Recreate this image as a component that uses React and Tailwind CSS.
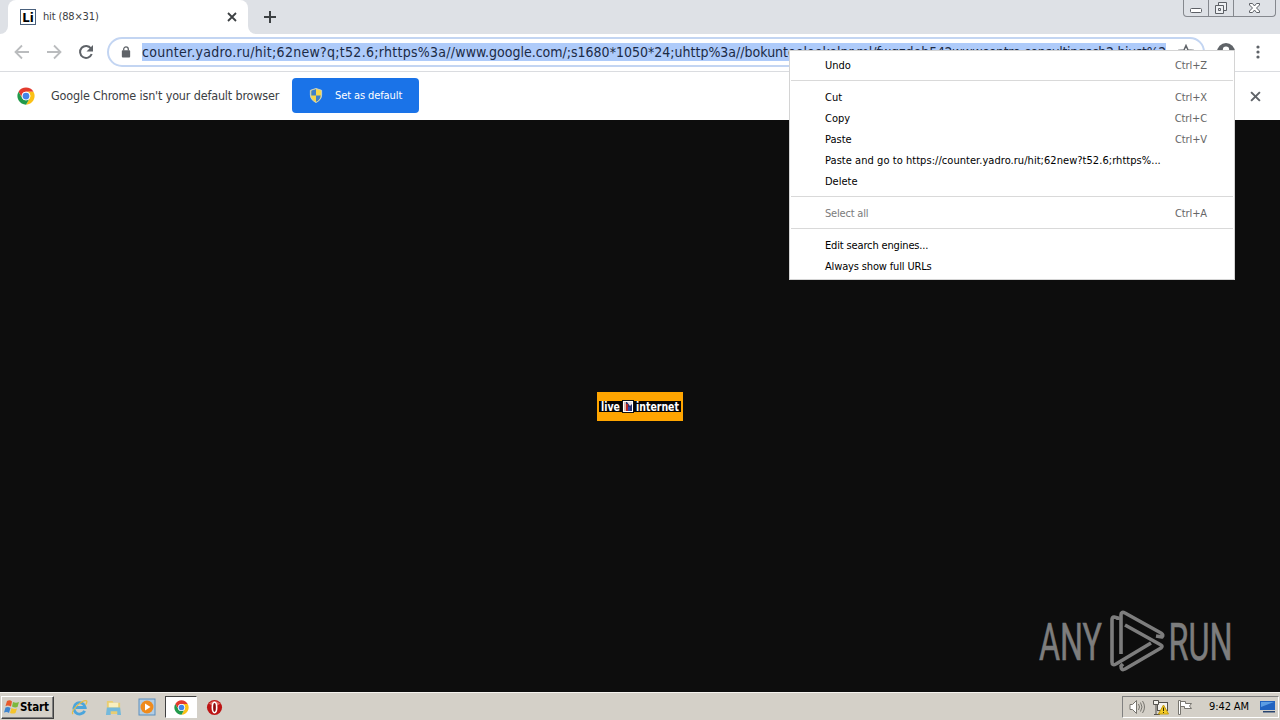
import React from 'react';

const menuGroups = [
  [{ label: 'Undo', keys: 'Ctrl+Z' }],
  [
    { label: 'Cut', keys: 'Ctrl+X' },
    { label: 'Copy', keys: 'Ctrl+C' },
    { label: 'Paste', keys: 'Ctrl+V' },
    {
      label: 'Paste and go to https://counter.yadro.ru/hit;62new?t52.6;rhttps%...',
      spacing: 'tracking-[0.05px]',
    },
    { label: 'Delete' },
  ],
  [{ label: 'Select all', keys: 'Ctrl+A', disabled: true, spacing: 'tracking-[-0.2px]' }],
  [
    { label: 'Edit search engines...', spacing: 'tracking-[-0.15px]' },
    { label: 'Always show full URLs', spacing: 'tracking-[-0.15px]' },
  ],
];

const ChromeLogo = ({ className }) => (
  <svg viewBox="0 0 48 48" className={className}>
    <circle cx="24" cy="24" r="23" fill="#fff" />
    <path d="M4.1 12.5A23 23 0 0 1 43.9 12.5H24A11.5 11.5 0 0 0 14 29.7Z" fill="#e33b2e" />
    <path d="M43.9 12.5A23 23 0 0 1 24 47L34 29.7A11.5 11.5 0 0 0 24 12.5Z" fill="#fbc116" />
    <path d="M24 47A23 23 0 0 1 4.1 12.5L14 29.7A11.5 11.5 0 0 0 34 29.7Z" fill="#229a4b" />
    <circle cx="24" cy="24" r="11.5" fill="#fff" />
    <circle cx="24" cy="24" r="9" fill="#4285e8" />
  </svg>
);

const CloseIcon = ({ className }) => (
  <svg viewBox="0 0 10 10" className={className} fill="none" stroke="currentColor">
    <path d="M1 1l8 8M9 1l-8 8" strokeWidth="1.8" />
  </svg>
);

const TabStrip = () => (
  <div className="flex h-[34px] justify-between bg-[#dee1e6]">
    <div className="flex">
      <div className="h-[34px] w-2 bg-white">
        <div className="h-full w-2 rounded-br-lg bg-[#dee1e6]"></div>
      </div>
      <div className="flex h-[34px] w-[240px] items-center rounded-t-lg bg-white pl-3 pr-[11px] text-[#3c4043]">
        <div className="flex h-4 w-4 items-center justify-center border border-[#49607c] bg-white">
          <span className="font-['DejaVu_Sans_Condensed'] text-[13px] font-bold leading-none text-black">Li</span>
        </div>
        <span className="ml-[7px] grow whitespace-nowrap pt-px text-[11px] tracking-[-0.15px]">hit (88×31)</span>
        <CloseIcon className="h-[10px] w-[10px]" />
      </div>
      <div className="h-[34px] w-2 bg-white">
        <div className="h-full w-2 rounded-bl-lg bg-[#dee1e6]"></div>
      </div>
      <svg viewBox="0 0 12 12" className="ml-2 mt-[11px] h-3 w-3">
        <path d="M6 0v12M0 6h12" stroke="#3c4043" strokeWidth="2" />
      </svg>
    </div>
    <div className="mr-1 flex h-[17px] w-[93px] rounded-b border border-t-0 border-[#85888e] text-[#5d6066]">
      <div className="w-[25px] border-r border-[#85888e]">
        <svg viewBox="0 0 24 16" className="h-4 w-6" fill="#fff" stroke="currentColor">
          <rect x="6.5" y="8.5" width="11" height="4" rx="1" />
        </svg>
      </div>
      <div className="w-[25px] border-r border-[#85888e]">
        <svg viewBox="0 0 24 16" className="h-4 w-6" fill="#eef0f3" stroke="currentColor">
          <path d="M9.5 2.5h8v8h-8z" />
          <path d="M6.5 5.5h8v8h-8z" />
          <path d="M9.5 8.5h2v2h-2z" />
        </svg>
      </div>
      <svg viewBox="0 0 41 16" className="h-4 w-[41px]" fill="#fff" stroke="currentColor">
        <path d="M15.500 3.500h3l2 2.500 2-2.500h3v1.500l-3 3 3 3v1.500h-3l-2-2.500-2 2.500h-3v-1.500l3-3-3-3z" />
      </svg>
    </div>
  </div>
);

const Toolbar = () => (
  <div className="flex h-[38px] items-center border-b border-[#dadce0] bg-white pb-px pl-[14px]">
    <svg viewBox="0 0 16 16" className="h-4 w-4" fill="none" stroke="#babcbe" strokeWidth="1.8">
      <path d="M15 8H2M8 1.500L1.500 8 8 14.500" />
    </svg>
    <svg viewBox="0 0 16 16" className="ml-4 h-4 w-4" fill="none" stroke="#babcbe" strokeWidth="1.8">
      <path d="M1 8h13M8 1.500L14.500 8 8 14.500" />
    </svg>
    <svg viewBox="0 0 16 16" className="ml-4 h-4 w-4">
      <path d="M13 4.500A6 6 0 1 0 13.700 10" fill="none" stroke="#5f6368" strokeWidth="2" />
      <path d="M15 1v6.500H8.500z" fill="#5f6368" />
    </svg>
    <div className="ml-[13px] flex h-[30px] w-[1098px] items-center rounded-full border-2 border-[#c3d5f2] bg-white pl-3">
      <svg viewBox="0 0 10 13" className="h-3 w-[10px]">
        <path d="M2.500 5V3.500a2.500 2.500 0 0 1 5 0V5" fill="none" stroke="#5f6368" strokeWidth="1.400" />
        <rect x="0.500" y="4.500" width="9" height="8" rx="1" fill="#5f6368" />
      </svg>
      <div className="ml-[11px] h-[18px] w-[1024px] overflow-hidden whitespace-nowrap bg-[#aecbfa] text-[14px] leading-[18px] text-[#1b2a45]">
        <span className="tracking-[0.28px]">counter.yadro.ru/hit;62new?q;t52.6;rhttps%3a//</span>
        <span>www.google.com/;s1680*1050*24;uhttp%3a//bokunteeloekelpr.ml/fwgzdeh</span>
        <span className="tracking-[-0.35px]">542wwwcentre.consultingsch2:hjust%2</span>
      </div>
      <svg viewBox="0 0 16 16" className="ml-3 h-4 w-4" fill="none" stroke="#5f6368" strokeWidth="1.500">
        <path d="M8 1.500l2 4.500 4.500.4-3.500 3 1 4.600-4-2.500-4 2.500 1-4.600-3.500-3L6 6z" />
      </svg>
    </div>
    <svg viewBox="0 0 20 20" className="ml-3 h-[18px] w-[18px]">
      <circle cx="10" cy="10" r="10" fill="#5f6368" />
      <circle cx="10" cy="7.500" r="3.500" fill="#fff" />
      <path d="M4 15c2-4 10-4 12 0-3 4-9 4-12 0z" fill="#fff" />
    </svg>
    <svg viewBox="0 0 4 14" className="ml-[21px] h-[14px] w-1" fill="#5f6368">
      <circle cx="2" cy="2" r="1.600" />
      <circle cx="2" cy="7" r="1.600" />
      <circle cx="2" cy="12" r="1.600" />
    </svg>
  </div>
);

const InfoBar = () => (
  <div className="flex h-12 items-center bg-white pb-px pl-[17px] pr-[19px]">
    <ChromeLogo className="mt-px h-[18px] w-[18px]" />
    <span className="ml-4 w-[241px] whitespace-nowrap pt-px text-[12.5px] tracking-[-0.17px] text-[#3c4043]">
      Google Chrome isn't your default browser
    </span>
    <button className="flex h-[35px] w-[127px] items-center rounded bg-[#1a73e8] pl-[17px] text-[11px] text-white">
      <svg viewBox="0 0 14 16" className="h-[15px] w-[14px]">
        <path d="M7 .5l6 2v5c0 4-3 6.500-6 8-3-1.500-6-4-6-8v-5z" fill="#f7d64a" />
        <path d="M7 1L2 2.700V8h5zM7 8h5c0 3.500-2.500 5.500-5 7z" fill="#3f80c9" />
        <path d="M7 .5l6 2v5c0 4-3 6.500-6 8-3-1.500-6-4-6-8v-5z" fill="none" stroke="#cbd3c8" />
      </svg>
      <span className="ml-3 whitespace-nowrap pt-px tracking-[-0.1px]">Set as default</span>
    </button>
    <CloseIcon className="ml-auto mt-px h-[11px] w-[11px] text-[#5f6368]" />
  </div>
);

const LiveInternet = () => (
  <svg viewBox="0 0 86 29" className="h-[29px] w-[86px]">
    <rect width="86" height="29" fill="#ffa500" />
    <rect x="2" y="9" width="82" height="11" fill="#050505" />
    <g fill="#fff" fontFamily="DejaVu Sans Condensed" fontWeight="bold" fontSize="11.5">
      <text x="4" y="19" textLength="19" lengthAdjust="spacingAndGlyphs">live</text>
      <text x="39" y="19" textLength="43" lengthAdjust="spacingAndGlyphs">internet</text>
    </g>
    <rect x="25" y="8" width="12" height="13" fill="#111" />
    <rect x="26" y="9" width="10" height="11" fill="#fff" />
    <rect x="27" y="10" width="8" height="9" fill="#26316f" />
    <path d="M27 10h2v9h-2z" fill="#d8b9b0" />
    <path d="M29 12h2v7h-2z" fill="#b32323" />
    <path d="M30 10h5v2l-2 2z" fill="#e5dfe4" />
    <path d="M31 15h2v4h-2z" fill="#2843a8" />
  </svg>
);

const Watermark = () => (
  <svg viewBox="0 0 200 70" className="h-[70px] w-[200px] overflow-visible">
    <g fill="#7d7d7d" stroke="#7d7d7d" strokeWidth="0.6" fontFamily="Roboto" fontSize="51">
      <text x="0" y="49.5" textLength="63" lengthAdjust="spacingAndGlyphs">ANY</text>
      <text x="129.500" y="49.5" textLength="64" lengthAdjust="spacingAndGlyphs">RUN</text>
    </g>
    <g fill="none" stroke="#7d7d7d" strokeWidth="3.6" strokeLinejoin="round">
      <path d="M79 10V8l-4-1q-2 0-2 3v42q0 4 4 2l35-21" />
      <path d="M82 44V5q0-4 4-2l36 20q3 2 1 4l-6-1" />
      <path d="M86 15l36 20q2 1 0 3L86 59q-4 2-4-3l2-2" />
    </g>
  </svg>
);

const ContextMenu = () => (
  <div className="absolute left-[789px] top-[50px] h-[230px] w-[446px] border border-[#d4d4d4] bg-white px-px pt-1 text-[11px] text-black">
    {menuGroups.map((group, i) => (
      <div key={i} className={i > 0 ? 'mt-1 border-t border-[#d9d9d9] pt-1.5' : ''}>
        {group.map((item) => (
          <div
            key={item.label}
            className={`flex h-[21px] items-center justify-between whitespace-nowrap pl-[34px] pr-[26px] pt-0.5 ${item.disabled ? 'text-[#7b7b7b]' : ''}`}
          >
            <span className={item.spacing}>{item.label}</span>
            <span className="tracking-[-0.1px] text-[#666]">{item.keys}</span>
          </div>
        ))}
      </div>
    ))}
  </div>
);

const Taskbar = () => (
  <div className="flex h-7 items-center border-t border-[#f4f2ee] bg-[#d4d0c8] pl-px pt-px">
    <button className="flex h-[23px] w-[53px] items-center border border-b-[#404040] border-l-white border-r-[#404040] border-t-white pl-0.5 shadow-[inset_-1px_-1px_0_#808080]">
      <svg viewBox="0 0 16 16" className="h-4 w-4">
        <path d="M3 2q3-1.500 5 .5L7 7.500Q4 6 1.500 7z" fill="#e8592b" />
        <path d="M9 3q3 1.500 6 0l-1.500 5Q11 9 8 7.500z" fill="#7cb83d" />
        <path d="M1.500 8.500q3-1 5 .5l-1.500 5q-2-1.500-5-.5z" fill="#3f85cf" />
        <path d="M7.500 9q3 1.500 5.500.5L11.500 14q-2.500 1-5.500 0z" fill="#f5c42c" />
      </svg>
      <span className="pt-px text-[11.5px] font-bold tracking-[-0.1px] text-black">Start</span>
    </button>
    <div className="ml-[17px] flex items-center">
      <svg viewBox="0 0 18 18" className="h-[17px] w-[17px]" fill="none">
        <path d="M14.500 12.500A6 6 0 1 1 15 9H5" stroke="#4ba5dc" strokeWidth="3" />
        <path d="M2 16C-1 12 13 0 16.500 2q1 1-1 4" stroke="#e7bd45" strokeWidth="1.300" />
      </svg>
      <svg viewBox="0 0 18 18" className="ml-[17px] h-[17px] w-[17px]">
        <path d="M2 2h6l1 2h7v12H2z" fill="#e9cd72" />
        <path d="M4 4h10v5H4z" fill="#f9efbf" />
        <path d="M2 9h14l1 8h-4v-4H6v4H1z" fill="#74b9dc" />
      </svg>
      <svg viewBox="0 0 18 18" className="ml-4 h-[18px] w-[18px]">
        <rect x="1" y="1" width="16" height="16" fill="#b2cde4" stroke="#5d8fbd" />
        <circle cx="9" cy="9" r="6.500" fill="#ef8b1d" />
        <path d="M7 5.500v7L12.500 9z" fill="#fff" />
      </svg>
      <div className="ml-[9px] flex h-[22px] w-8 items-center justify-center border border-b-white border-l-[#404040] border-r-white border-t-[#404040] bg-white">
        <ChromeLogo className="h-[15px] w-[15px]" />
      </div>
      <svg viewBox="0 0 18 18" className="ml-[9px] h-[17px] w-[17px]">
        <circle cx="9" cy="9" r="8" fill="#bd1515" />
        <path d="M3 5q6-6 12 0-5 4-12 0z" fill="#e36b62" />
        <ellipse cx="9" cy="9" rx="2.300" ry="5.500" fill="#8d0d0d" stroke="#fff" strokeWidth="1.700" />
      </svg>
    </div>
    <div className="ml-auto mr-px flex h-[22px] w-[157px] items-center border border-b-white border-l-[#808080] border-r-white border-t-[#808080] pl-1.5">
      <svg viewBox="0 0 16 16" className="h-4 w-4" fill="none" stroke="#77756f">
        <path d="M1 5.500h2.500l4-4v13l-4-4H1z" fill="#fff" />
        <path d="M9.500 5q2 3 0 6M11.500 3.500q3 4.500 0 9M13.500 2q4 6 0 12" />
      </svg>
      <svg viewBox="0 0 18 16" className="ml-[7px] h-4 w-[18px]" fill="none" stroke="#55534e">
        <rect x="5.500" y="3.500" width="10" height="8" fill="#f4f2ed" />
        <path d="M1.500 1.500h5v4h-5zM4 5.500v10M2 15.500h6" fill="#f4f2ed" />
        <path d="M11.500 6l5 9h-10z" fill="#f4cb26" stroke="#c49b0b" />
        <path d="M11.500 8.500v3.500M11.500 13v1" stroke="#332b05" />
      </svg>
      <svg viewBox="0 0 16 16" className="ml-[7px] h-4 w-4" fill="#fff" stroke="#77756f">
        <path d="M1.500 15.500v-14h2v14zM3.500 2.500h5v2h6l-2 2.500 2 2.500h-7v-2h-4z" />
      </svg>
      <span className="ml-4 w-[42px] whitespace-nowrap pt-px text-[11px] tracking-[-0.1px] text-black">9:42 AM</span>
      <svg viewBox="0 0 16 14" className="ml-[9px] h-[14px] w-4">
        <path d="M0 1h15v9H0z" fill="#2163c0" />
        <path d="M1 2h13L1 7z" fill="#5c9de3" />
        <path d="M3 11h12v1.500H3z" fill="#28446f" />
      </svg>
    </div>
  </div>
);

export default function App() {
  return (
    <div className="relative flex h-[720px] w-[1280px] flex-col overflow-hidden bg-[#0d0d0d] font-['DejaVu_Sans_Condensed','DejaVu_Sans',sans-serif]">
      <TabStrip />
      <Toolbar />
      <InfoBar />
      <main className="flex grow flex-col justify-between pb-3 pl-[597px] pt-[272px]">
        <LiveInternet />
        <div className="flex justify-end pr-[41px]">
          <Watermark />
        </div>
      </main>
      <Taskbar />
      <ContextMenu />
    </div>
  );
}
